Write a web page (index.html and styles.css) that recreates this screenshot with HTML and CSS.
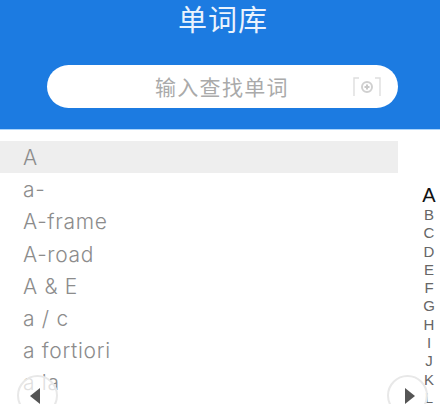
FILE: index.html
```html
<!DOCTYPE html>
<html lang="zh">
<head>
<meta charset="utf-8">
<title>单词库</title>
<link rel="stylesheet" href="styles.css">
</head>
<body>
<div class="page">
  <header class="header">
    <h1 class="title">单词库</h1>
    <div class="search">
      <span class="placeholder">输入查找单词</span>
      <svg class="scan" width="30" height="22" viewBox="0 0 30 22" fill="none">
        <path d="M7 2H2V20" stroke="#dedede" stroke-width="1.4"/>
        <path d="M23 2H28V20" stroke="#dedede" stroke-width="1.4"/>
        <circle cx="15" cy="11" r="5" stroke="#d0d0d0" stroke-width="2"/>
        <path d="M12.5 11H17.5M15 8.5V13.5" stroke="#c8c8c8" stroke-width="2"/>
      </svg>
    </div>
  </header>
  <main class="body">
    <ul class="words">
      <li class="word selected">A</li>
      <li class="word">a-</li>
      <li class="word">A-frame</li>
      <li class="word">A-road</li>
      <li class="word">A &amp; E</li>
      <li class="word">a / c</li>
      <li class="word">a fortiori</li>
      <li class="word">a la</li>
    </ul>
    <ol class="index">
      <li class="letter current">A</li>
      <li class="letter">B</li>
      <li class="letter">C</li>
      <li class="letter">D</li>
      <li class="letter">E</li>
      <li class="letter">F</li>
      <li class="letter">G</li>
      <li class="letter">H</li>
      <li class="letter">I</li>
      <li class="letter">J</li>
      <li class="letter">K</li>
      <li class="letter">L</li>
    </ol>
  </main>
  <div class="nav prev"><span class="arrow arrow-left"></span></div>
  <div class="nav next"><span class="arrow arrow-right"></span></div>
</div>
</body>
</html>
```
FILE: styles.css
```css
* { box-sizing: border-box; }
html, body { margin: 0; padding: 0; }
body { background: #fff; font-family: "Inter", "Noto Sans CJK SC", sans-serif; }
.page { position: relative; width: 440px; height: 404px; overflow: hidden; }
.header {
  height: 130px;
  background: #1c7be1;
  border-bottom: 1px solid #a9d4fb;
  display: flex;
  flex-direction: column;
  align-items: center;
}
.title {
  margin: 0 0 0 6px;
  height: 65px;
  font: 400 29px/37px "Noto Sans CJK SC", sans-serif;
  letter-spacing: 1px;
  color: #eaf3fd;
}
.search {
  width: 351px;
  height: 43px;
  margin-left: 5px;
  border-radius: 22px;
  background: #fff;
  display: flex;
  align-items: center;
  padding-left: 108px;
}
.placeholder {
  font: 400 21px/43px "Noto Sans CJK SC", sans-serif;
  letter-spacing: 1.3px;
  color: #aaa;
  width: 197px;
  white-space: nowrap;
}
.scan { flex: none; }
.body { display: flex; padding-top: 11px; }
.words { list-style: none; margin: 0; padding: 0; width: 398px; flex: none; }
.word {
  height: 32.2px;
  padding-left: 23px;
  font-size: 21px;
  font-weight: 300;
  line-height: 33px;
  letter-spacing: .7px;
  color: #8c8c8c;
}
.selected { background: #eee; }
.index {
  list-style: none;
  margin: 0;
  padding: 44px 2px 0 0;
  flex: 1;
  display: flex;
  flex-direction: column;
  align-items: flex-end;
}
.letter {
  width: 18px;
  height: 18.3px;
  font: 400 15px/18.3px "Liberation Sans", sans-serif;
  color: #666;
  text-align: center;
}
.current { font-size: 20px; color: #111; height: 20px; line-height: 20px; margin-bottom: 1px; }
.nav {
  position: absolute;
  top: 375px;
  width: 41px;
  height: 41px;
  border-radius: 50%;
  border: 2px solid #e8e8e8;
  background: rgba(255, 255, 255, .72);
  display: flex;
  align-items: center;
  justify-content: center;
}
.prev { left: 17px; }
.next { left: 387px; }
.arrow { width: 0; height: 0; border-top: 8.5px solid transparent; border-bottom: 8.5px solid transparent; }
.arrow-left { border-right: 10px solid #555; margin-right: 5px; }
.arrow-right { border-left: 10px solid #555; margin-left: 5px; }
```
